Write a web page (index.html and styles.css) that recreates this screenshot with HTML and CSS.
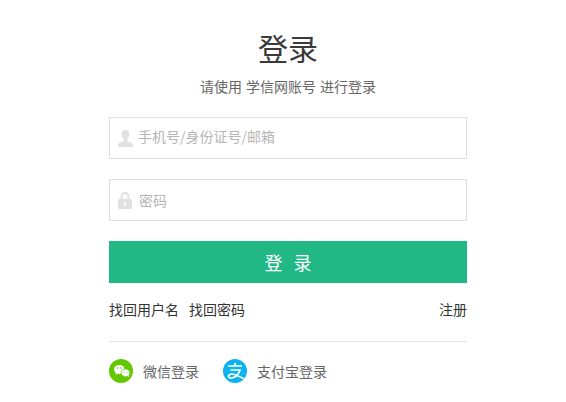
FILE: index.html
```html
<!DOCTYPE html>
<html lang="zh-CN">
<head>
  <meta charset="UTF-8" />
  <title>登录</title>
  <link rel="stylesheet" href="styles.css">
</head>
<body>
  <div class="container">
    <h1>登录</h1>
    <p class="subtitle">请使用 学信网账号 进行登录</p>

    <form class="login-form">
      <div class="field">
        <span class="field-icon">
          <svg viewBox="0 0 16 18" width="15" height="17">
            <path fill="#e1e1e1" d="M8 0c2.600 0 4.100 2 4.100 4.600 0 2-1 3.900-2.200 5v1.500c0 .7 1.500 1.200 3 1.800 1.700.7 3.100 1.300 3.100 2.800V18H0v-2.300c0-1.500 1.400-2.100 3.100-2.800 1.500-.6 3-1.100 3-1.800V9.600c-1.200-1.100-2.200-3-2.200-5C3.900 2 5.400 0 8 0z"/>
          </svg>
        </span>
        <input type="text" class="input-user" placeholder="手机号/身份证号/邮箱">
      </div>
      <div class="field">
        <span class="field-icon">
          <svg viewBox="0 0 14 17" width="14" height="17">
            <path fill="#e1e1e1" d="M7 0c2.700 0 4.400 1.800 4.400 4.400V7h1.100c.8 0 1.500.7 1.500 1.500v7c0 .8-.7 1.500-1.500 1.500h-11C.7 17 0 16.300 0 15.500v-7C0 7.700.7 7 1.500 7h1.100V4.400C2.600 1.800 4.300 0 7 0zm0 2C5.500 2 4.600 3 4.600 4.500V7h4.800V4.500C9.400 3 8.500 2 7 2z"/>
            <rect fill="#fff" x="6.200" y="10" width="1.600" height="4"/>
          </svg>
        </span>
        <input type="password" class="input-pass" placeholder="密码">
      </div>
      <button type="button" class="submit">登 录</button>
    </form>

    <div class="links">
      <a href="#">找回用户名</a>
      <a href="#">找回密码</a>
      <a href="#" class="register">注册</a>
    </div>

    <div class="social">
      <a href="#">
        <svg viewBox="0 0 24 24" width="24" height="24">
          <circle cx="12" cy="12" r="12" fill="#62c800"/>
          <ellipse cx="10.300" cy="10.500" rx="5.200" ry="4.500" fill="#fff"/>
          <path fill="#fff" d="M7 13.500l-.6 2.300 2.600-1.300z"/>
          <ellipse cx="16.500" cy="13.900" rx="4.500" ry="3.900" fill="#fff" stroke="#62c800" stroke-width=".8"/>
          <path fill="#fff" d="M18.500 17l1.300 1.200-.2-2.100z"/>
          <circle cx="8.500" cy="9" r=".8" fill="#62c800"/>
          <circle cx="12" cy="9" r=".8" fill="#62c800"/>
          <circle cx="15" cy="13" r=".6" fill="#62c800"/>
          <circle cx="18" cy="13" r=".6" fill="#62c800"/>
        </svg>
        <span>微信登录</span>
      </a>
      <a href="#">
        <svg viewBox="0 0 24 24" width="24" height="24">
          <circle cx="12" cy="12" r="12" fill="#0eb3ee"/>
          <path fill="none" stroke="#fff" stroke-width="1.700" d="M5 7h14M12 4v3M7.500 11h9.500c-1 3.500-4 7-8 8-2 .5-3.500-.3-3.500-1.800 0-2 3-2.700 6-1.700 3 1 6 2.500 10 4.500"/>
        </svg>
        <span>支付宝登录</span>
      </a>
    </div>
  </div>
</body>
</html>
```

FILE: styles.css
```css
body {
  margin: 0;
  background: #fff;
  font-family: "Liberation Sans", "Noto Sans CJK SC", sans-serif;
  font-size: 14px;
  color: #333;
}

a {
  color: inherit;
  text-decoration: none;
}

.container {
  width: 358px;
  margin-left: 109px;
  padding-top: 29px;
}

h1 {
  margin: 0;
  font-size: 30px;
  font-weight: 400;
  line-height: 42px;
  text-align: center;
  color: #3a3a3a;
}

.subtitle {
  margin: 6px 0 0;
  line-height: 20px;
  text-align: center;
  color: #666;
}

.login-form {
  margin-top: 20px;
}

.field {
  display: flex;
  align-items: center;
  gap: 4px;
  height: 42px;
  margin-bottom: 20px;
  padding-left: 8px;
  box-sizing: border-box;
  border: 1px solid #ddd;
}

.field-icon {
  flex: none;
  display: flex;
  width: 16px;
}

.field input {
  flex: 1;
  min-width: 0;
  border: 0;
  outline: 0;
  padding: 0;
  font: inherit;
}

.field .input-user {
  padding-bottom: 4px;
  font-family: "Noto Sans CJK SC", sans-serif;
}

.field .input-pass {
  padding: 2px 0 0 1px;
}

.field input::placeholder {
  color: #b5b5b5;
  opacity: 1;
}

.submit {
  display: block;
  width: 100%;
  height: 42px;
  border: 0;
  padding: 0 0 0 3px;
  background: #22b886;
  color: #fff;
  font: inherit;
  font-size: 18px;
  letter-spacing: 3px;
}

.links {
  display: flex;
  gap: 10px;
  margin-top: 17px;
  padding-bottom: 21px;
  border-bottom: 1px solid #e5e5e5;
  line-height: 20px;
}

.register {
  margin-left: auto;
}

.social {
  display: flex;
  gap: 24px;
  margin-top: 17px;
}

.social a {
  display: flex;
  align-items: center;
  gap: 10px;
  color: #666;
}
```
